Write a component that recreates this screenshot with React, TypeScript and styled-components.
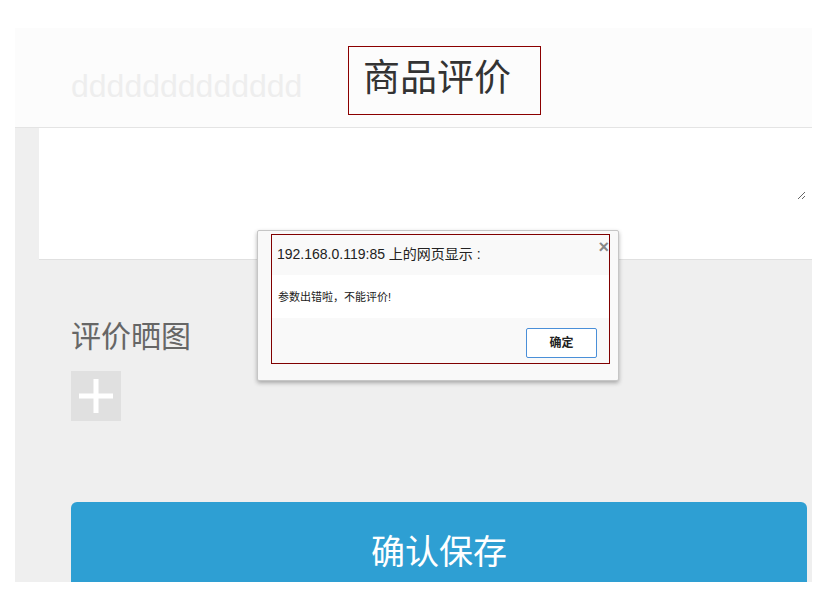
import React from "react";
import styled, { createGlobalStyle } from "styled-components";

const GlobalStyle = createGlobalStyle`
	html, body {
		margin: 0;
		padding: 0;
		background: #ffffff;
		font-family: "Liberation Sans", "Noto Sans CJK SC", sans-serif;
	}
`;

const App = () => {
	return (
		<>
			<GlobalStyle />
			<Page>
				<Header>
					<Placeholder>ddddddddddddd</Placeholder>
					<TitleBox>商品评价</TitleBox>
				</Header>
				<TextBlock>
					<Comment />
				</TextBlock>
				<Body>
					<Label>评价晒图</Label>
					<AddButton>
						<svg width="36" height="36" viewBox="0 0 36 36">
							<path d="M18 1v34M1 18h34" stroke="#ffffff" strokeWidth="5" />
						</svg>
					</AddButton>
					<SaveButton>确认保存</SaveButton>
				</Body>
			</Page>
			<Alert>
				<AlertInner>
					<AlertTitle>192.168.0.119:85 上的网页显示 :</AlertTitle>
					<Close>×</Close>
					<AlertMessage>参数出错啦，不能评价!</AlertMessage>
					<AlertFooter>
						<OkButton>确定</OkButton>
					</AlertFooter>
				</AlertInner>
			</Alert>
		</>
	);
};

export default App;

const Page = styled.div`
	margin: 28px 0 0 15px;
	width: 797px;
	height: 554px;
	background: #efefef;
	overflow: hidden;
`;

const Header = styled.div`
	display: flex;
	align-items: flex-start;
	height: 99px;
	padding-left: 56px;
	background: #fcfcfc;
	border-bottom: 1px solid #e4e4e4;
`;

const Placeholder = styled.span`
	width: 277px;
	margin-top: 36px;
	font-size: 32px;
	line-height: 44px;
	color: #eeeeee;
	white-space: nowrap;
	overflow: hidden;
`;

const TitleBox = styled.div`
	box-sizing: border-box;
	width: 193px;
	height: 69px;
	margin-top: 18px;
	padding-left: 14px;
	border: 1px solid #8b0000;
	font-family: "Noto Sans CJK SC", sans-serif;
	font-size: 37px;
	line-height: 57px;
	color: #333333;
`;

const TextBlock = styled.div`
	margin-left: 24px;
	height: 131px;
	background: #ffffff;
	border-bottom: 1px solid #e0e0e0;
`;

const Comment = styled.textarea`
	display: block;
	box-sizing: border-box;
	width: 767px;
	height: 72px;
	border: none;
	outline: none;
	background: transparent;
	resize: vertical;
`;

const Body = styled.div`
	display: flex;
	flex-direction: column;
	align-items: flex-start;
	padding-left: 56px;
`;

const Label = styled.div`
	margin-top: 55px;
	font-family: "Noto Sans CJK SC", sans-serif;
	font-size: 30px;
	line-height: 38px;
	color: #666666;
`;

const AddButton = styled.div`
	display: flex;
	align-items: center;
	justify-content: center;
	width: 50px;
	height: 50px;
	margin-top: 18px;
	background: #e0e0e0;
`;

const SaveButton = styled.div`
	width: 736px;
	height: 96px;
	margin-top: 81px;
	border-radius: 6px;
	background: #2e9fd3;
	color: #ffffff;
	font-family: "Noto Sans CJK SC", sans-serif;
	font-size: 34px;
	line-height: 96px;
	text-align: center;
`;

const Alert = styled.div`
	position: absolute;
	left: 257px;
	top: 230px;
	box-sizing: border-box;
	width: 362px;
	height: 151px;
	padding: 3px 0 0 13px;
	background: #f9f9f9;
	border: 1px solid #c6c6c6;
	border-radius: 2px;
	box-shadow: 0 2px 4px rgba(0, 0, 0, 0.3);
`;

const AlertInner = styled.div`
	position: relative;
	box-sizing: border-box;
	width: 339px;
	height: 130px;
	border: 1px solid #800000;
	display: flex;
	flex-direction: column;
`;

const AlertTitle = styled.div`
	height: 40px;
	padding-left: 5px;
	font-size: 14px;
	line-height: 38px;
	color: #222222;
`;

const Close = styled.span`
	position: absolute;
	right: 0;
	top: 3px;
	font-size: 18px;
	font-weight: bold;
	line-height: 18px;
	color: #888888;
`;

const AlertMessage = styled.div`
	height: 43px;
	padding-left: 6px;
	background: #ffffff;
	font-size: 11px;
	line-height: 44px;
	color: #222222;
`;

const AlertFooter = styled.div`
	flex: 1;
	display: flex;
	justify-content: flex-end;
	align-items: flex-start;
	padding: 10px 12px 0 0;
`;

const OkButton = styled.div`
	box-sizing: border-box;
	width: 71px;
	height: 30px;
	border: 1px solid #4a8fd8;
	border-radius: 2px;
	background: #ffffff;
	font-size: 12px;
	font-weight: bold;
	line-height: 28px;
	text-align: center;
	color: #222222;
`;
